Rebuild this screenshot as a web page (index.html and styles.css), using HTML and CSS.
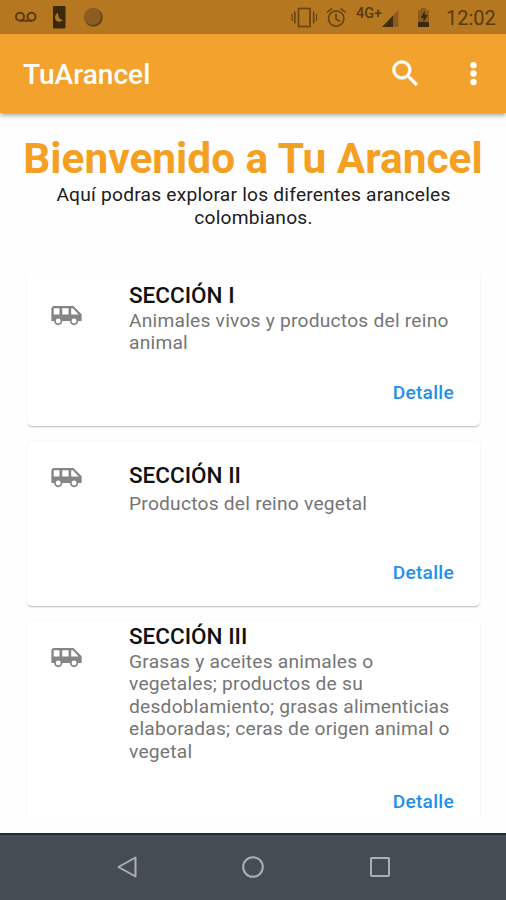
FILE: index.html
```html
<!DOCTYPE html>
<html lang="es">
<head>
<meta charset="utf-8">
<title>TuArancel</title>
<link rel="stylesheet" href="styles.css">
</head>
<body>
<svg class="defs" width="0" height="0">
  <symbol id="van" viewBox="0 0 24 24"><path fill-rule="evenodd" d="M17 5H3c-1.100 0-2 .89-2 2v9h2c0 1.650 1.340 3 3 3s3-1.350 3-3h5.500c0 1.650 1.340 3 3 3s3-1.350 3-3H23v-5l-6-6zM2.700 11.200V6.700h4.200v4.500zM8.900 11.200V6.700h4.600v4.500zM15.400 11.200V6.700h1.200l4.200 4.500zM6 14.200a1.800 1.800 0 1 0 0 3.600 1.800 1.800 0 1 0 0-3.600zM17.500 14.200a1.800 1.800 0 1 0 0 3.600 1.800 1.800 0 1 0 0-3.600z"/></symbol>
</svg>
<header>
  <div class="status">
    <svg class="notices" width="120" height="34" viewBox="0 0 120 34">
      <g fill="none" stroke="#5c3b0d" stroke-width="2"><circle cx="20" cy="16.700" r="4"/><circle cx="31.500" cy="16.700" r="4"/><path d="M20 20.700h11.500"/></g>
      <rect x="53" y="6" width="12.500" height="22.500" rx="1" fill="#3c290d"/>
      <path d="M58 13a4.500 4.500 0 1 0 5 7Q58 19.500 58 13z" fill="#b17520"/>
      <circle cx="93.500" cy="17.500" r="9.300" fill="#62431a"/><circle cx="92.500" cy="16.500" r="8.500" fill="#8d5d20"/>
    </svg>
    <div class="system">
      <svg width="58" height="34" viewBox="0 0 58 34" fill="none" stroke="#6b4411" stroke-width="1.700">
        <rect x="7.500" y="8.500" width="11.500" height="18"/><path d="M3.800 11.500v12M22.700 11.500v12"/><path d="M1 14v7M25.500 14v7" stroke-width="1.200"/>
        <circle cx="45.200" cy="18.500" r="7.700"/><path d="M45 13.500v5.500l4 2.500"/><path d="M36 12.300l5-4M54.500 12.300l-5-4"/>
      </svg>
      <span class="network">4G+</span>
      <svg class="levels" width="70" height="34" viewBox="0 0 70 34">
        <path d="M14.500 10v17H9V15.500z" fill="#8d5b1b"/><path d="M-2 27l11-11.500V27z" fill="#442d0c"/>
        <path d="M34 10h3V8h5v2h3v12H34z" fill="#8d5b1b"/><path d="M34 22h11v5H34zM40.500 11l-4 7h3v4l4.500-7h-3z" fill="#3c290d"/>
      </svg>
      <span class="clock">12:02</span>
    </div>
  </div>
  <div class="appbar">
    <h1>TuArancel</h1>
    <div class="actions">
      <svg width="35" height="35" viewBox="0 0 24 24" fill="#fff" stroke="#fff" stroke-width=".3"><path d="M15.500 14h-.79l-.28-.27A6.470 6.470 0 0 0 16 9.500 6.500 6.500 0 1 0 9.500 16c1.610 0 3.090-.59 4.230-1.570l.27.28v.79l5 4.990L20.490 19l-4.990-5zm-6 0C7.010 14 5 11.990 5 9.500S7.010 5 9.500 5 14 7.010 14 9.500 11.990 14 9.500 14z"/></svg>
      <svg width="9" height="35" viewBox="0 0 9 35" fill="#fff"><circle cx="4.500" cy="9.200" r="3.200"/><circle cx="4.500" cy="17.500" r="3.200"/><circle cx="4.500" cy="26" r="3.200"/></svg>
    </div>
  </div>
</header>
<main>
  <h2>Bienvenido a Tu Arancel</h2>
  <p class="intro">Aquí podras explorar los diferentes aranceles<br>colombianos.</p>
  <div class="list">
    <article class="card card-two-line">
      <svg class="icon"><use href="#van"/></svg>
      <div class="text"><h3>SECCIÓN I</h3><p>Animales vivos y productos del reino<br>animal</p></div>
      <a class="detail">Detalle</a>
    </article>
    <article class="card card-one-line">
      <svg class="icon"><use href="#van"/></svg>
      <div class="text"><h3>SECCIÓN II</h3><p>Productos del reino vegetal</p></div>
      <a class="detail">Detalle</a>
    </article>
    <article class="card card-long">
      <svg class="icon"><use href="#van"/></svg>
      <div class="text"><h3>SECCIÓN III</h3><p>Grasas y aceites animales o<br>vegetales; productos de su<br>desdoblamiento; grasas alimenticias<br>elaboradas; ceras de origen animal o<br>vegetal</p></div>
      <a class="detail">Detalle</a>
    </article>
  </div>
</main>
<nav>
  <svg width="24" height="24" viewBox="0 0 24 24"><path d="M20.500 2.500v19L3.500 12z"/></svg>
  <svg width="24" height="24" viewBox="0 0 24 24"><circle cx="12" cy="12" r="9.800"/></svg>
  <svg width="24" height="24" viewBox="0 0 24 24"><rect x="3" y="3" width="18" height="18" rx="1"/></svg>
</nav>
</body>
</html>
```
FILE: styles.css
```css
* { box-sizing: border-box; }
body {
  margin: 0;
  width: 506px;
  height: 900px;
  display: flex;
  flex-direction: column;
  overflow: hidden;
  background: #fefefe;
  font-family: Roboto, "Liberation Sans", sans-serif;
}
h1, h2, h3, p { margin: 0; white-space: nowrap; }
svg { display: block; flex: none; }
.defs { display: none; }
header {
  height: 113px;
  flex: none;
  background: #f4a22e;
  box-shadow: 0 2px 5px rgba(0, 0, 0, .4);
}
.status {
  height: 34px;
  display: flex;
  justify-content: space-between;
  background: #b57821;
}
.system { display: flex; color: #57390e; padding-right: 9px; }
.network {
  width: 35px;
  padding: 5px 0 0 7px;
  font-size: 14.500px;
  line-height: 17px;
  font-weight: 500;
  margin-right: 0;
}
.levels { overflow: visible; }
.clock { font-size: 20px; line-height: 37px; width: 51px; margin-left: -8px; }
.appbar {
  height: 79px;
  display: flex;
  align-items: center;
  justify-content: space-between;
  padding: 0 28px 0 23px;
}
h1 { color: #fff; font-size: 28.100px; font-weight: 500; line-height: 32px; padding-top: 2px; }
.actions { display: flex; gap: 46px; }
main { flex: 1; min-height: 0; padding-top: 21px; }
h2 {
  color: #f4a022;
  font-size: 42.400px;
  line-height: 50px;
  font-weight: 700;
  text-align: center;
}
.intro {
  color: #202020;
  font-size: 19.200px;
  line-height: 22.500px;
  letter-spacing: .22px;
  text-align: center;
  padding-left: 1px;
}
.list {
  margin-top: 47px;
  height: 540px;
  overflow: hidden;
  padding: 0 26px 0 27px;
}
.card {
  height: 165px;
  display: grid;
  grid-template-columns: 102px 1fr;
  align-content: space-between;
  margin-bottom: 15px;
  padding: 21px 26px 22px 0;
  border-radius: 5px;
  background: #fff;
  box-shadow: 0 2px 2px -1px rgba(0, 0, 0, .25), 0 0 2px rgba(0, 0, 0, .07);
}
.card:first-child { margin-top: -15px; }
.icon { width: 33px; height: 33px; margin-left: 23px; fill: #858585; }
h3 { color: #101010; font-size: 22.500px; line-height: 26px; font-weight: 500; }
.text p { color: #757575; font-size: 19.200px; line-height: 22.500px; letter-spacing: .23px; }
.card-two-line .icon { margin-top: 17px; }
.card-one-line .icon { margin-top: -1px; }
.card-one-line .text p { margin-top: 5px; }
.card-long { height: 214px; padding-top: 2px; }
.card-long .text p, .card-two-line .text p { padding-top: 1.600px; }
.card-long .icon { margin-top: 18px; }
.detail {
  grid-column: 2;
  justify-self: end;
  color: #2490e9;
  font-size: 19.200px;
  line-height: 23px;
  font-weight: 500;
  letter-spacing: .25px;
}
nav {
  height: 67px;
  flex: none;
  display: flex;
  justify-content: center;
  gap: 102.500px;
  padding-top: 19px;
  border-top: 2px solid #193135;
  background: #464d52;
}
nav svg { fill: none; stroke: #aab0b3; stroke-width: 2; stroke-linejoin: round; margin-top: 1px; }
```
